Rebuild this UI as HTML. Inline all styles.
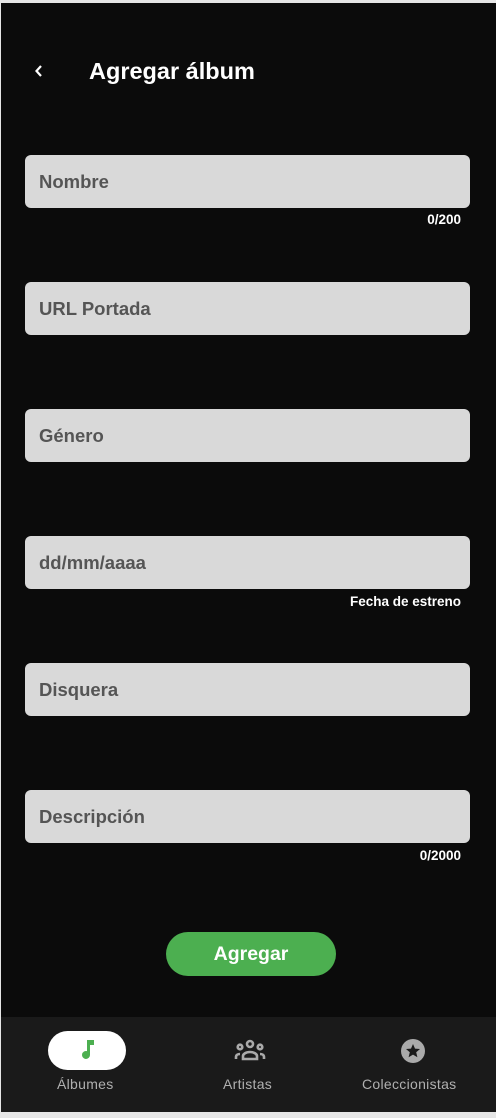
<!DOCTYPE html>
<html><head><meta charset="utf-8"><style>
*{margin:0;padding:0;box-sizing:border-box}
body{width:496px;height:1118px;background:#e6e6e6;font-family:"Liberation Sans",Roboto,sans-serif;position:relative;overflow:hidden}
.app{position:absolute;left:1px;top:3px;width:495px;height:1109px;background:#0b0b0b}
.t{position:absolute;white-space:nowrap}
.f{position:absolute;left:24px;width:445px;height:53px;background:#d9d9d9;border-radius:6px}
.f span{position:absolute;left:14px;top:16px;font-size:18.5px;font-weight:bold;color:#555}
.c{position:absolute;right:35px;font-size:13.5px;font-weight:bold;color:#fff}
.nav{position:absolute;left:0;top:1014px;width:495px;height:95px;background:#1a1a1a}
.nl{position:absolute;top:59px;font-size:14px;color:#b0b0b0;letter-spacing:.3px}
</style></head><body>
<div class="app">
<svg class="t" style="left:32px;top:61px" width="12" height="14" viewBox="0 0 12 14"><path d="M8 2 L3.5 7 L8 12" stroke="#fff" stroke-width="2.2" fill="none"/></svg>
<div class="t" style="left:88px;top:55px;font-size:23.5px;font-weight:bold;color:#fff">Agregar álbum</div>
<div class="f" style="top:152px"><span>Nombre</span></div>
<div class="c" style="top:209px">0/200</div>
<div class="f" style="top:279px"><span>URL Portada</span></div>
<div class="f" style="top:406px"><span>Género</span></div>
<div class="f" style="top:533px"><span>dd/mm/aaaa</span></div>
<div class="c" style="top:591px">Fecha de estreno</div>
<div class="f" style="top:660px"><span>Disquera</span></div>
<div class="f" style="top:787px"><span>Descripción</span></div>
<div class="c" style="top:845px">0/2000</div>
<div class="t" style="left:165px;top:929px;width:170px;height:44px;border-radius:22px;background:#4caf50;color:#fff;font-size:19.5px;font-weight:bold;text-align:center;line-height:44px">Agregar</div>
<div class="nav">
<div class="t" style="left:47px;top:14px;width:78px;height:39px;border-radius:20px;background:#fff"></div>
<svg class="t" style="left:78px;top:22px" width="16" height="22" viewBox="0 0 16 22"><path d="M8 1h7v5h-4v10a4 4 0 1 1-3-3.9z" fill="#4caf50"/></svg>
<svg class="t" style="left:233px;top:22px" width="32" height="22" viewBox="0 0 32 22"><g fill="none" stroke="#aaa" stroke-width="2.6"><circle cx="16" cy="5" r="3"/><circle cx="6" cy="8" r="2.3"/><circle cx="26" cy="8" r="2.3"/><path d="M9 20v-3c0-2 3-4 7-4s7 2 7 4v3z"/><path d="M2 20v-2c0-2 2-3 4-3M30 20v-2c0-2-2-3-4-3"/></g></svg>
<svg class="t" style="left:399px;top:21px" width="26" height="26" viewBox="0 0 26 26"><circle cx="13" cy="13" r="12" fill="#aaa"/><path d="M13 6l2 4.6 5 .4-3.8 3.3 1.2 4.9L13 16.6 8.6 19.2 9.8 14.3 6 11l5-.4z" fill="#1a1a1a"/></svg>
<div class="nl" style="left:56px">Álbumes</div>
<div class="nl" style="left:222px">Artistas</div>
<div class="nl" style="left:361px">Coleccionistas</div>
</div>
</div>
</body></html>
